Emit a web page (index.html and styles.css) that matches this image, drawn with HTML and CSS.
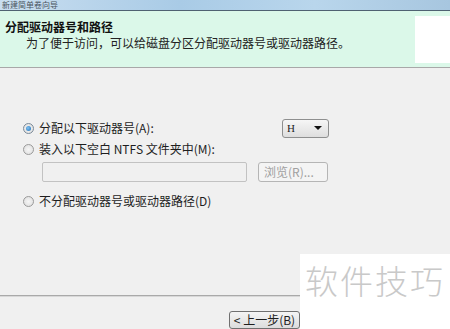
FILE: index.html
```html
<!DOCTYPE html>
<html lang="zh-CN">
<head>
    <meta charset="UTF-8">
    <title>分配驱动器号和路径</title>
    <link rel="stylesheet" href="styles.css">
</head>
<body>
    <div class="window">
        <div class="titlebar"><span class="caption">新建简单卷向导</span></div>
        <div class="header">
            <div class="header-text">
                <div class="title">分配驱动器号和路径</div>
                <div class="subtitle">为了便于访问，可以给磁盘分区分配驱动器号或驱动器路径。</div>
            </div>
            <div class="logo-box"></div>
        </div>

        <div class="content">
            <div class="row">
                <span class="radio checked"></span>
                <span class="label">分配以下驱动器号(A):</span>
                <div class="select">H<span class="arrow"></span></div>
            </div>
            <div class="row">
                <span class="radio"></span>
                <span class="label">装入以下空白 NTFS 文件夹中(M):</span>
            </div>
            <div class="row path-row">
                <div class="path-input"></div>
                <div class="btn disabled">浏览(R)...</div>
            </div>
            <div class="row last">
                <span class="radio"></span>
                <span class="label">不分配驱动器号或驱动器路径(D)</span>
            </div>
        </div>

        <div class="footer">
            <div class="btn back">&lt; 上一步(B)</div>
        </div>

        <div class="watermark">软件技巧</div>
    </div>
</body>
</html>
```

FILE: styles.css
```css
body {
    margin: 0;
    font-family: "Noto Sans CJK SC", "DejaVu Sans", sans-serif;
    font-size: 12px;
    color: #1e1e1e;
    background: #f0f0f0;
}
.window {
    position: relative;
    width: 450px;
    height: 329px;
    overflow: hidden;
    background: #f0f0f0;
}
.titlebar {
    height: 10px;
    background: linear-gradient(to right, #c9def0, #a9cbe6 40%, #b9d6ec 70%, #a7c6df);
    border-bottom: 1px solid #4f6272;
    overflow: hidden;
}
.caption {
    display: block;
    padding-left: 2px;
    font-size: 8px;
    line-height: 10px;
    color: #4a5560;
}
.header {
    height: 56px;
    background: #dbf8e9;
    border-bottom: 1px solid #a8a8a8;
    display: flex;
    justify-content: space-between;
}
.header-text {
    padding: 8px 0 0 5px;
}
.title {
    font-weight: bold;
    font-size: 12px;
    line-height: 16px;
    color: #111;
}
.subtitle {
    padding-left: 21px;
    line-height: 15px;
    color: #222;
}
.logo-box {
    width: 35px;
    height: 47px;
    margin-top: 5px;
    background: #ffffff;
}
.content {
    height: 228px;
    padding: 50px 0 0 23px;
    box-sizing: border-box;
    border-bottom: 1px solid #a9a9a9;
    box-shadow: 0 1px 0 #d8d8d8;
    width: 450px;
}
.row {
    display: flex;
    align-items: center;
    height: 20px;
    width: 306px;
    margin-bottom: 1px;
}
.row.path-row {
    margin: 3px 0 9px 19px;
    width: 286px;
    justify-content: space-between;
}
.label {
    margin-left: 5px;
    line-height: 16px;
    white-space: nowrap;
}
.radio {
    width: 11px;
    height: 11px;
    border-radius: 50%;
    border: 1px solid #9a9a9a;
    background: radial-gradient(circle, #f6f6f6 0%, #dcdcdc 100%);
    box-sizing: border-box;
    flex: none;
    position: relative;
}
.radio.checked {
    border-color: #7a8a99;
}
.radio.checked::after {
    content: "";
    position: absolute;
    left: 2px;
    top: 2px;
    width: 5px;
    height: 5px;
    border-radius: 50%;
    background: radial-gradient(circle at 40% 40%, #7fc2f2, #1f6fb8);
}
.select {
    margin-left: auto;
    width: 47px;
    height: 19px;
    box-sizing: border-box;
    border: 1px solid #8e8f8f;
    border-radius: 3px;
    background: linear-gradient(#f6f6f6, #dedede);
    display: flex;
    align-items: center;
    justify-content: space-between;
    padding: 0 6px 0 4px;
    font-family: "Liberation Serif", serif;
    font-size: 11px;
}
.arrow {
    width: 0;
    height: 0;
    border-left: 4px solid transparent;
    border-right: 4px solid transparent;
    border-top: 4px solid #111;
}
.path-input {
    width: 205px;
    height: 20px;
    box-sizing: border-box;
    border: 1px solid #c2c2c2;
    border-radius: 2px;
    background: #f0f0f0;
}
.btn {
    height: 20px;
    box-sizing: border-box;
    border: 1px solid #707070;
    border-radius: 3px;
    background: linear-gradient(#f4f4f4, #dcdcdc);
    padding: 0 5px;
    display: flex;
    align-items: center;
    line-height: 16px;
    white-space: nowrap;
}
.btn.disabled {
    width: 70px;
    border-color: #b5b5b5;
    background: #f4f4f4;
    color: #a0a0a0;
}
.footer {
    display: flex;
    justify-content: flex-end;
    padding: 15px 150px 0 0;
}
.btn.back {
    width: 71px;
    height: 18px;
    padding: 0 3px;
    justify-content: center;
}
.watermark {
    position: absolute;
    right: 0;
    bottom: 0;
    width: 150px;
    height: 75px;
    background: #ffffff;
    color: #c9c9c9;
    font-size: 33px;
    font-weight: 300;
    line-height: 40px;
    padding: 6px 0 0 5px;
    box-sizing: border-box;
    letter-spacing: 2px;
}
```
